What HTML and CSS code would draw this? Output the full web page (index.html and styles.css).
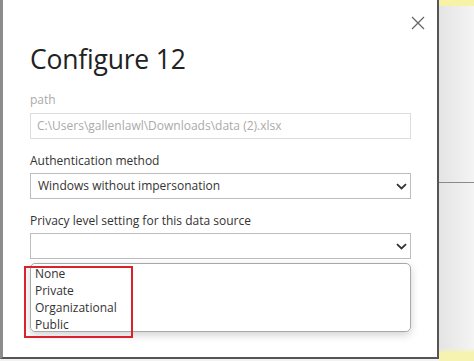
FILE: index.html
```html
<!DOCTYPE html>
<html lang="en">
<head>
    <meta charset="UTF-8">
    <title>Configure 12</title>
    <link rel="stylesheet" href="styles.css">
</head>
<body>
    <div class="screen">
        <div class="dialog">
            <button class="close" aria-label="Close">
                <svg width="14" height="14" viewBox="0 0 14 14">
                    <path d="M1 1L13 13M13 1L1 13" stroke="#666" stroke-width="1.3" fill="none"/>
                </svg>
            </button>
            <h1 class="title">Configure 12</h1>

            <label class="field-label muted">path</label>
            <div class="input disabled">C:\Users\gallenlawl\Downloads\data (2).xlsx</div>

            <label class="field-label">Authentication method</label>
            <div class="select">
                <span>Windows without impersonation</span>
                <svg class="chevron" width="11" height="7" viewBox="0 0 11 7">
                    <path d="M1 1.2L5.5 5.5L10 1.2" stroke="#333" stroke-width="1.8" fill="none"/>
                </svg>
            </div>

            <label class="field-label">Privacy level setting for this data source</label>
            <div class="select">
                <span></span>
                <svg class="chevron" width="11" height="7" viewBox="0 0 11 7">
                    <path d="M1 1.2L5.5 5.5L10 1.2" stroke="#333" stroke-width="1.8" fill="none"/>
                </svg>
            </div>

            <ul class="options">
                <li>None</li>
                <li>Private</li>
                <li>Organizational</li>
                <li>Public</li>
            </ul>
            <div class="highlight"></div>
        </div>
        <div class="side">
            <div class="side-top"></div>
            <div class="side-mid"></div>
            <div class="side-bottom"></div>
        </div>
    </div>
</body>
</html>
```

FILE: styles.css
```css
body {
    margin: 0;
    font-family: "Open Sans", "Noto Sans", sans-serif;
    background: #f2f2f2;
}
.screen {
    display: flex;
    width: 474px;
    height: 361px;
    overflow: hidden;
}
.dialog {
    position: relative;
    box-sizing: border-box;
    width: 439px;
    height: 359px;
    flex-shrink: 0;
    background: #fff;
    border-left: 3px solid #8c8c8c;
    border-right: 2px solid #555;
    border-bottom: 2px solid #555;
    padding: 0 0 0 27px;
}
.close {
    position: absolute;
    top: 16px;
    right: 12px;
    background: none;
    border: none;
    padding: 0;
    width: 14px;
    height: 14px;
    cursor: pointer;
}
.title {
    margin: 0;
    padding-top: 40px;
    font-size: 26.5px;
    font-weight: 400;
    color: #222;
    line-height: 38px;
    letter-spacing: -0.2px;
}
.field-label {
    display: block;
    font-size: 12px;
    color: #333;
    line-height: 16px;
    margin-top: 14px;
    margin-bottom: 4px;
}
.field-label.muted {
    color: #aaa;
    margin-top: 14px;
    margin-bottom: 5px;
}
.input,
.select {
    box-sizing: border-box;
    width: 381px;
    height: 26px;
    border: 1px solid #bdbdbd;
    font-size: 12px;
    color: #333;
    line-height: 24px;
    padding: 0 0 0 7px;
}
.input.disabled {
    border-color: #ddd;
    color: #aaa;
    padding-left: 6px;
}
.select {
    display: flex;
    justify-content: space-between;
    align-items: center;
    padding-right: 3px;
}
.chevron {
    margin-top: 1px;
}
.options {
    list-style: none;
    margin: 4px 0 0;
    padding: 1px 0 0 4px;
    box-sizing: border-box;
    width: 381px;
    height: 69px;
    border: 1px solid #a8a8a8;
    border-radius: 5px;
    box-shadow: 0 3px 8px rgba(0, 0, 0, 0.18);
    font-size: 12px;
    color: #333;
    line-height: 17px;
}
.highlight {
    position: absolute;
    left: 21px;
    top: 266px;
    width: 105px;
    height: 68px;
    border: 2px solid #d8232a;
}
.side {
    flex: 1;
    display: flex;
    flex-direction: column;
    background: linear-gradient(90deg, #e4e4e4, #f4f4f4);
}
.side-top {
    height: 6px;
    background: #f7f3a6;
}
.side-mid {
    height: 176px;
    border-bottom: 1px solid #8a8a8a;
}
.side-bottom {
    flex: 1;
    background: linear-gradient(180deg, transparent 0, transparent 165px, #f6f3b0 170px);
}
```
